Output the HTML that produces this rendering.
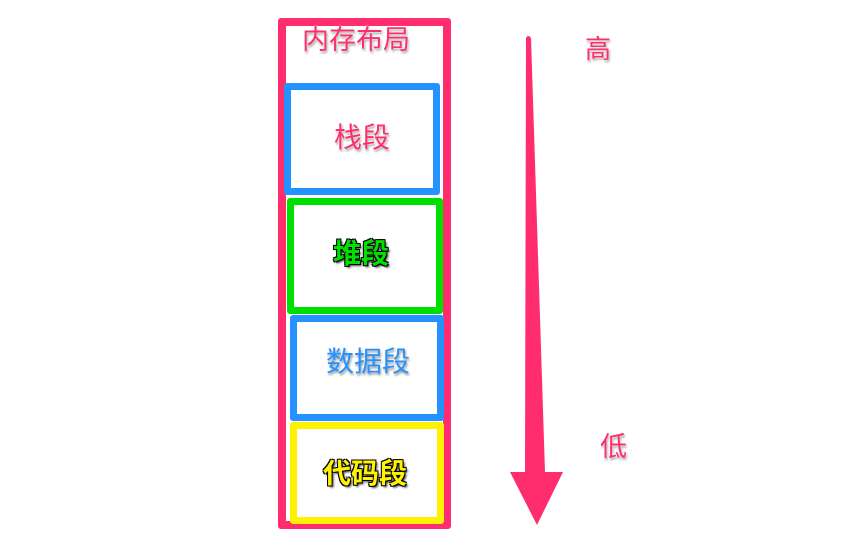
<!DOCTYPE html>
<html><head><meta charset="utf-8"><style>
body{margin:0;width:858px;height:544px;background:#fff;position:relative;overflow:hidden;font-family:"Liberation Sans","Noto Sans CJK SC",sans-serif}
.b{position:absolute;box-sizing:border-box;border-radius:3px;background:#fff}
.t{position:absolute;font-size:28px;line-height:28px;white-space:nowrap}
.pk{color:#ff2d6e;text-shadow:0 0 2px #fff,1px 2px 2px #999}
.bl{color:#2492ff;text-shadow:1px 2px 2px #999}
.gr{color:#00e000;text-shadow:-1px -1px 0 #000,1px -1px 0 #000,-1px 1px 0 #000,1px 1px 0 #000,2px 2px 2px #444;font-weight:bold}
.yl{color:#fff200;text-shadow:-1px -1px 0 #000,1px -1px 0 #000,-1px 1px 0 #000,1px 1px 0 #000,2px 2px 2px #444;font-weight:bold}
</style></head><body>
<div class="b" style="left:278px;top:18px;width:173px;height:511px;border:8px solid #ff2d6e"></div>
<div class="t pk" style="left:302px;top:26px;font-size:27px">内存布局</div>
<div class="b" style="left:284px;top:83px;width:156px;height:112px;border:7px solid #2492ff"></div>
<div class="t pk" style="left:334px;top:124px">栈段</div>
<div class="b" style="left:287px;top:198px;width:156px;height:116px;border:7px solid #00e000"></div>
<div class="t gr" style="left:333px;top:240px">堆段</div>
<div class="b" style="left:290px;top:315px;width:154px;height:106px;border:7px solid #2492ff"></div>
<div class="t bl" style="left:326px;top:348px">数据段</div>
<div class="b" style="left:290px;top:422px;width:154px;height:102px;border:7px solid #fff200"></div>
<div class="t yl" style="left:323px;top:460px">代码段</div>
<svg style="position:absolute;left:0;top:0" width="858" height="544">
<path d="M526,38 Q528,34 531,38 L545,472 L563,472 L537,525 L510,472 L525,472 Z" fill="#ff2d6e"/>
</svg>
<div class="t pk" style="left:585px;top:36px;font-size:26px;line-height:26px">高</div>
<div class="t pk" style="left:600px;top:434px;font-size:27px;line-height:27px">低</div>
</body></html>
